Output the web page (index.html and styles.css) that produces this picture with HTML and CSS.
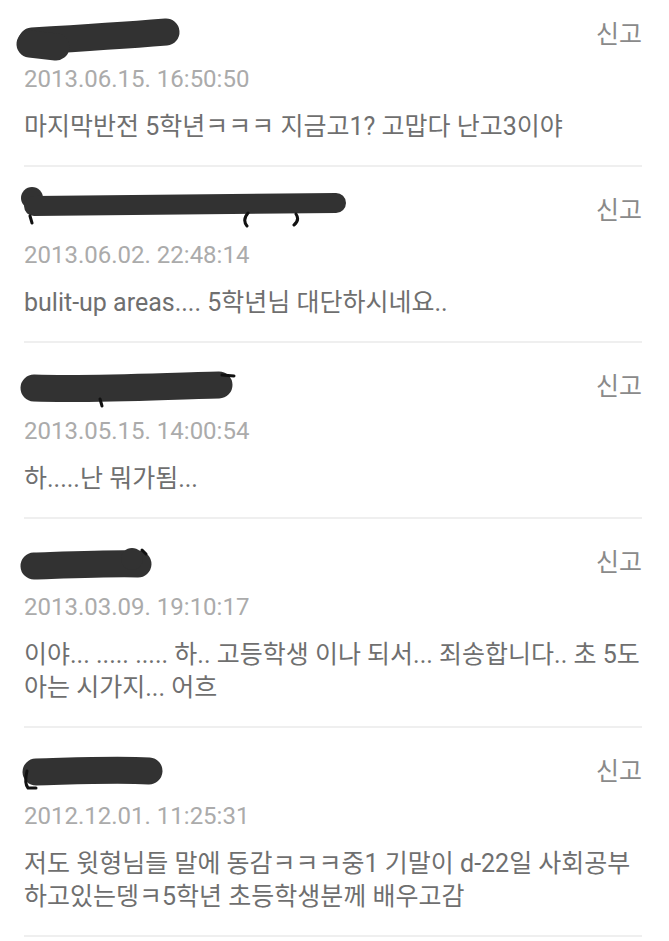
FILE: index.html
```html
<!DOCTYPE html>
<html lang="ko">
<head>
    <meta charset="UTF-8">
    <meta name="viewport" content="width=device-width, initial-scale=1.0">
    <title>댓글</title>
    <link rel="stylesheet" href="styles.css">
</head>
<body>
<div class="comment-list">
    <!-- comment 1 -->
    <div class="comment">
        <div class="comment-head">
            <svg class="name-mask" width="170" height="40" viewBox="0 0 170 40">
                <path d="M16 25 C 50 23, 100 20, 150 16" />
                <path d="M14 28 L40 31" />
            </svg>
            <span class="report">신고</span>
        </div>
        <div class="comment-date">2013.06.15. 16:50:50</div>
        <p class="comment-text">마지막반전 5학년ㅋㅋㅋ 지금고1? 고맙다 난고3이야</p>
    </div>

    <!-- comment 2 -->
    <div class="comment">
        <div class="comment-head">
            <svg class="name-mask" width="340" height="40" viewBox="0 0 340 40">
                <circle class="blob" cx="16" cy="6" r="11" />
                <path class="thin" d="M18 14 L320 11" />
                <path class="bits" d="M14 24 L16 31 M232 21 Q226 28 231 34 M280 22 Q284 28 278 33" />
            </svg>
            <span class="report">신고</span>
        </div>
        <div class="comment-date">2013.06.02. 22:48:14</div>
        <p class="comment-text">bulit-up areas.... 5학년님 대단하시네요..</p>
    </div>

    <!-- comment 3 -->
    <div class="comment">
        <div class="comment-head">
            <svg class="name-mask" width="225" height="40" viewBox="0 0 225 40">
                <path d="M18 20 C 80 22, 150 18, 203 17" />
                <path class="bits" d="M206 7 L218 8 M84 31 L86 38" />
            </svg>
            <span class="report">신고</span>
        </div>
        <div class="comment-date">2013.05.15. 14:00:54</div>
        <p class="comment-text">하.....난 뭐가됨...</p>
    </div>

    <!-- comment 4 -->
    <div class="comment">
        <div class="comment-head">
            <svg class="name-mask" width="145" height="40" viewBox="0 0 145 40">
                <path d="M18 22 C 50 21, 100 19, 122 20" />
                <circle class="blob" cx="116" cy="15" r="11" />
                <path class="bits" d="M126 6 L130 10" />
            </svg>
            <span class="report">신고</span>
        </div>
        <div class="comment-date">2013.03.09. 19:10:17</div>
        <p class="comment-text">이야... ..... ..... 하.. 고등학생 이나 되서... 죄송합니다.. 초 5도 아는 시가지... 어흐</p>
    </div>

    <!-- comment 5 -->
    <div class="comment">
        <div class="comment-head">
            <svg class="name-mask" width="155" height="40" viewBox="0 0 155 40">
                <path d="M20 19 C 60 18, 100 16, 133 18" />
                <path class="bits" d="M11 18 Q 8 30 12 35 L20 35" />
            </svg>
            <span class="report">신고</span>
        </div>
        <div class="comment-date">2012.12.01. 11:25:31</div>
        <p class="comment-text">저도 윗형님들 말에 동감ㅋㅋㅋ중1 기말이 d-22일 사회공부 하고있는뎅ㅋ5학년 초등학생분께 배우고감</p>
    </div>
</div>
</body>
</html>
```

FILE: styles.css
```css
body {
    margin: 0;
    background: #ffffff;
    font-family: Roboto, "Noto Sans CJK KR", sans-serif;
}
.comment-list {
    margin-top: -9px;
    padding: 0 27px 0 24px;
}
.comment {
    padding: 25px 0 22px;
    border-bottom: 2px solid #efefef;
}
.comment-head {
    display: flex;
    align-items: center;
    justify-content: space-between;
    height: 40px;
}
.name-mask {
    margin-left: -8px;
    overflow: visible;
}
.name-mask path {
    fill: none;
    stroke: #323232;
    stroke-width: 27;
    stroke-linecap: round;
    stroke-linejoin: round;
}
.name-mask path.thin {
    stroke-width: 20;
}
.name-mask path.bits {
    stroke: #111111;
    stroke-width: 3;
}
.name-mask .blob {
    fill: #323232;
}
.report {
    margin-bottom: 8px;
    font-family: "Noto Sans CJK KR", sans-serif;
    font-size: 25px;
    color: #8a8a8a;
}
.comment-date {
    margin-top: 6px;
    font-size: 24px;
    line-height: 34px;
    color: #ababab;
}
.comment-text {
    margin: 14px 0 0;
    font-size: 25px;
    line-height: 33px;
    color: #6f6f6f;
}
```
